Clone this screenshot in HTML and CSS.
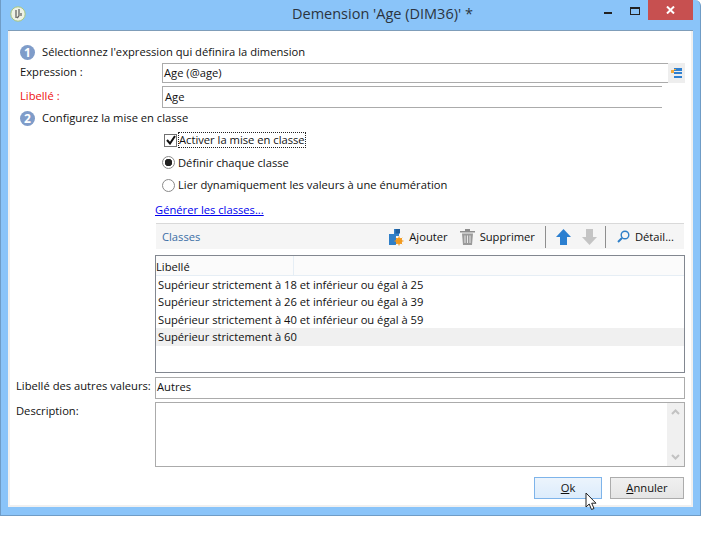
FILE: index.html
```html
<!DOCTYPE html>
<html lang="fr">
<head>
    <meta charset="UTF-8">
    <meta name="viewport" content="width=device-width, initial-scale=1.0">
    <title>Demension 'Age (DIM36)' *</title>
    <link rel="stylesheet" href="styles.css">
</head>
<body>
    <div class="window">
        <div class="titlebar">
            <svg class="app-icon" width="16" height="16" viewBox="0 0 16 16">
                <circle cx="8" cy="8" r="7.2" fill="#eef2e6" stroke="#a9c77e"/>
                <path d="M6 4v8M9 3v7M9 10l-2 2M11 7v3" fill="none" stroke="#666" stroke-width="1.3"/>
            </svg>
            <div class="title">Demension 'Age (DIM36)' *</div>
            <div class="controls">
                <span class="min-btn"></span>
                <span class="max-btn"></span>
                <span class="close-btn">
                    <svg width="9" height="8" viewBox="0 0 9 8"><path d="M1 .5l7 7M8 .5l-7 7" stroke="#fff" stroke-width="2"/></svg>
                </span>
            </div>
        </div>

        <div class="content">
            <div class="step step-one"><span class="badge">1</span>Sélectionnez l'expression qui définira la dimension</div>

            <div class="field field-expr">
                <label class="field-label">Expression :</label>
                <div class="line-input line-expr">Age (@age)</div>
                <span class="expr-btn">
                    <svg width="11" height="10" viewBox="0 0 11 10">
                        <rect x="0" y="2" width="3" height="3" fill="#f2a93b"/>
                        <rect x="3" y="0" width="8" height="3" fill="#2f80d0"/>
                        <rect x="3" y="1" width="2" height="1" fill="#f2a93b"/>
                        <rect x="3" y="4" width="8" height="2" fill="#2f80d0"/>
                        <rect x="3" y="8" width="8" height="2" fill="#2f80d0"/>
                    </svg>
                </span>
            </div>

            <div class="field field-name">
                <label class="field-label required">Libellé :</label>
                <div class="line-input line-name">Age</div>
            </div>

            <div class="step step-two"><span class="badge">2</span>Configurez la mise en classe</div>

            <div class="options">
                <div class="option option-check">
                    <span class="checkbox">
                        <svg width="10" height="10" viewBox="0 0 10 10"><path d="M1 5l3 3.5L9 1" fill="none" stroke="#111" stroke-width="2"/></svg>
                    </span>
                    <span class="focused">Activer la mise en classe</span>
                </div>
                <div class="option"><span class="radio checked"></span>Définir chaque classe</div>
                <div class="option"><span class="radio"></span>Lier dynamiquement les valeurs à une énumération</div>
            </div>

            <a class="gen-link" href="#">Générer les classes...</a>

            <div class="toolbar">
                <span class="toolbar-title">Classes</span>
                <span class="tool tool-add">
                    <svg width="16" height="18" viewBox="0 0 16 18">
                        <path d="M1 6h5V1h5v7H8v9H1z" fill="#2f7fc8"/>
                        <path d="M7.500 1H12v4.500H7.500z" fill="#1f5f9e"/>
                        <circle cx="11" cy="13" r="3.200" fill="#f29a1f"/>
                        <path d="M11 8.500v9M6.500 13h9M7.800 9.800l6.400 6.400M14.200 9.800l-6.400 6.400" stroke="#f29a1f"/>
                    </svg>
                    Ajouter
                </span>
                <span class="tool tool-del">
                    <svg width="15" height="17" viewBox="0 0 15 17">
                        <path d="M0 3h15v1.500H0zM5 1h5v2H5z" fill="#8d8d8d"/>
                        <path d="M2 5.500h11L12 17H3z" fill="#9a9a9a"/>
                        <path d="M5 7.500v7.500M7.500 7.500v7.500M10 7.500v7.500" stroke="#e8e8e8"/>
                    </svg>
                    Supprimer
                </span>
                <span class="sep"></span>
                <svg class="arrow" width="15" height="16" viewBox="0 0 15 16"><path d="M7.500 0L15 8h-4v8H4V8H0z" fill="#2b7fd0"/></svg>
                <svg class="arrow arrow-down" width="15" height="16" viewBox="0 0 15 16"><path d="M7.500 16L15 8h-4V0H4v8H0z" fill="#c4c4c4"/></svg>
                <span class="sep sep-last"></span>
                <span class="tool tool-detail">
                    <svg width="13" height="13" viewBox="0 0 13 13">
                        <circle cx="8" cy="5" r="3.800" fill="none" stroke="#2f7fc8" stroke-width="1.400"/>
                        <path d="M5 8l-4 4" stroke="#2f7fc8" stroke-width="2"/>
                    </svg>
                    Détail...
                </span>
            </div>

            <div class="grid">
                <div class="grid-head"><span class="head-cell">Libellé</span></div>
                <div class="grid-row">Supérieur strictement à 18 et inférieur ou égal à 25</div>
                <div class="grid-row">Supérieur strictement à 26 et inférieur ou égal à 39</div>
                <div class="grid-row">Supérieur strictement à 40 et inférieur ou égal à 59</div>
                <div class="grid-row selected">Supérieur strictement à 60</div>
            </div>

            <div class="field field-other">
                <label class="wide-label">Libellé des autres valeurs:</label>
                <div class="box-input">Autres</div>
            </div>

            <div class="field field-desc">
                <label class="wide-label">Description:</label>
                <div class="desc-box">
                    <div class="scrollbar">
                        <svg width="9" height="6" viewBox="0 0 9 6"><path d="M1 5l3.500-3.500L8 5" fill="none" stroke="#c2c2c2" stroke-width="2"/></svg>
                        <svg width="9" height="6" viewBox="0 0 9 6"><path d="M1 1l3.500 3.500L8 1" fill="none" stroke="#c2c2c2" stroke-width="2"/></svg>
                    </div>
                </div>
            </div>

            <div class="buttons">
                <button class="btn btn-ok"><u>O</u>k</button>
                <button class="btn btn-cancel"><u>A</u>nnuler</button>
            </div>

            <svg class="cursor" width="14" height="21" viewBox="0 0 14 21">
                <path d="M1 1v14l3.200-3 2.300 5.500 2.500-1-2.300-5.300H11z" transform="translate(0 1)" fill="#fff" stroke="#222"/>
            </svg>
        </div>
    </div>
</body>
</html>
```

FILE: styles.css
```css
body {
    margin: 0;
    background-color: #ffffff;
    font-family: "Open Sans", Arial, sans-serif;
    font-size: 11.2px;
    color: #111111;
}

.window {
    width: 701px;
    height: 516px;
    box-sizing: border-box;
    padding: 0 7px 8px 7px;
    background-color: #8ac4f9;
    border: 1px solid #6f9cc6;
    border-top: 0;
    border-radius: 0 6px 0 0;
    display: flex;
    flex-direction: column;
}

.titlebar {
    height: 30px;
    flex: none;
    display: flex;
}

.app-icon {
    margin: 6px 0 0 2px;
}

.title {
    margin: 4px 0 0 266px;
    font-size: 14.5px;
    color: #2b3440;
}

.controls {
    margin-left: auto;
    display: flex;
}

.min-btn {
    width: 8px;
    height: 2px;
    margin: 12px 0 0 0;
    background-color: #222222;
}

.max-btn {
    width: 8px;
    height: 5px;
    margin: 7px 0 0 18px;
    border: 1px solid #222222;
    border-top-width: 2px;
}

.close-btn {
    width: 45px;
    height: 20px;
    margin-left: 8px;
    background-color: #c75050;
    display: flex;
    align-items: center;
    justify-content: center;
}

.content {
    flex: 1;
    position: relative;
    background-color: #ffffff;
    border-top: 1px solid #7f9db9;
    box-shadow: inset 2px 0 0 #f0f0f0, inset -2px 0 0 #f0f0f0, inset 0 -2px 0 #f0f0f0;
    line-height: 16px;
}

.step {
    display: flex;
    align-items: center;
    height: 16px;
    padding-left: 12px;
}

.step-one {
    margin-top: 13px;
}

.step-two {
    margin-top: 2px;
}

.badge {
    width: 15px;
    height: 15px;
    margin-right: 7px;
    border-radius: 50%;
    background-color: #7f9cc9;
    color: #ffffff;
    font-weight: bold;
    font-size: 12px;
    text-align: center;
    line-height: 15px;
}

.field {
    display: flex;
}

.field-label {
    width: 142px;
    margin-left: 12px;
    flex: none;
}

.required {
    color: #ee1111;
}

.field-expr {
    margin-top: 3px;
    height: 20px;
    line-height: 18px;
}

.field-name {
    margin-top: 3px;
    height: 22px;
    line-height: 19px;
}

.line-input {
    box-sizing: border-box;
    border-style: solid;
    border-color: #ababab;
    border-width: 1px 0 1px 1px;
    padding-left: 1px;
    background-color: #ffffff;
}

.line-expr {
    width: 506px;
    height: 20px;
}

.line-name {
    width: 500px;
    height: 22px;
    padding-left: 2px;
}

.expr-btn {
    width: 17px;
    height: 20px;
    background-color: #eeeeee;
    display: flex;
    align-items: center;
    justify-content: center;
}

.options {
    margin: 3px 0 0 156px;
}

.option {
    height: 22.5px;
    display: flex;
    align-items: center;
}

.checkbox {
    width: 11px;
    height: 11px;
    box-sizing: content-box;
    border: 1px solid #707070;
    margin-right: 1px;
    display: flex;
    align-items: center;
    justify-content: center;
}

.focused {
    border: 1px dotted #222222;
    line-height: 14px;
}

.radio {
    width: 11px;
    height: 11px;
    border: 1px solid #8a8a8a;
    border-radius: 50%;
    margin: 0 3px 0 -2px;
    background-color: #ffffff;
    flex: none;
}

.radio.checked {
    background: radial-gradient(circle, #222222 0 3.5px, #ffffff 4px);
}

.gen-link {
    display: block;
    width: max-content;
    margin: 5.5px 0 0 147px;
    color: #0000ee;
}

.toolbar {
    margin: 5px 0 0 148px;
    width: 528px;
    height: 26px;
    box-sizing: border-box;
    border-top: 1px solid #d9d9d9;
    background-color: #f5f5f5;
    display: flex;
    align-items: center;
}

.toolbar-title {
    margin-left: 6px;
    color: #3a6ea5;
    flex: 1;
}

.tool {
    display: flex;
    align-items: center;
    gap: 5px;
}

.tool-del {
    margin-left: 12px;
}

.sep {
    width: 1px;
    height: 22px;
    background-color: #8e8e8e;
    margin: 0 10px;
}

.sep-last {
    margin: 0 11px 0 8px;
}

.arrow-down {
    margin-left: 11px;
}

.tool-detail {
    margin-right: 10px;
}

.grid {
    box-sizing: border-box;
    margin: 6px 0 0 147px;
    width: 530px;
    height: 118px;
    border: 1px solid #828790;
}

.grid-head {
    height: 19px;
    border-bottom: 1px solid #e6eef5;
    background-color: #fbfbfb;
    display: flex;
    align-items: center;
}

.head-cell {
    width: 137px;
    height: 100%;
    line-height: 21px;
    border-right: 1px solid #e6eef5;
}

.grid-row {
    height: 17.400px;
    line-height: 17px;
    padding-left: 2px;
}

.grid-row.selected {
    background-color: #f0f0f0;
}

.wide-label {
    width: 139px;
    margin-left: 8px;
    flex: none;
}

.field-other {
    margin-top: 4px;
    line-height: 18px;
}

.box-input {
    box-sizing: border-box;
    width: 530px;
    height: 22px;
    border: 1px solid #ababab;
    padding-left: 1px;
}

.field-desc {
    margin-top: 3px;
}

.field-desc .wide-label {
    margin-top: 1px;
}

.desc-box {
    box-sizing: border-box;
    width: 530px;
    height: 65px;
    border: 1px solid #ababab;
    display: flex;
    justify-content: flex-end;
}

.scrollbar {
    width: 17px;
    background-color: #f0f0f0;
    display: flex;
    flex-direction: column;
    align-items: center;
    justify-content: space-between;
    padding: 6px 0;
}

.buttons {
    margin: 10px 9px 0 0;
    display: flex;
    justify-content: flex-end;
    gap: 8px;
}

.btn {
    box-sizing: border-box;
    height: 22px;
    font: inherit;
    color: #111111;
    padding: 0;
}

.btn-ok {
    width: 68px;
    border: 1px solid #7eb4ea;
    background: linear-gradient(#ecf4fc, #dcecfc);
}

.btn-cancel {
    width: 74px;
    border: 1px solid #acacac;
    background: linear-gradient(#f0f0f0, #e5e5e5);
}

.cursor {
    position: absolute;
    left: 577px;
    top: 460px;
}
```
